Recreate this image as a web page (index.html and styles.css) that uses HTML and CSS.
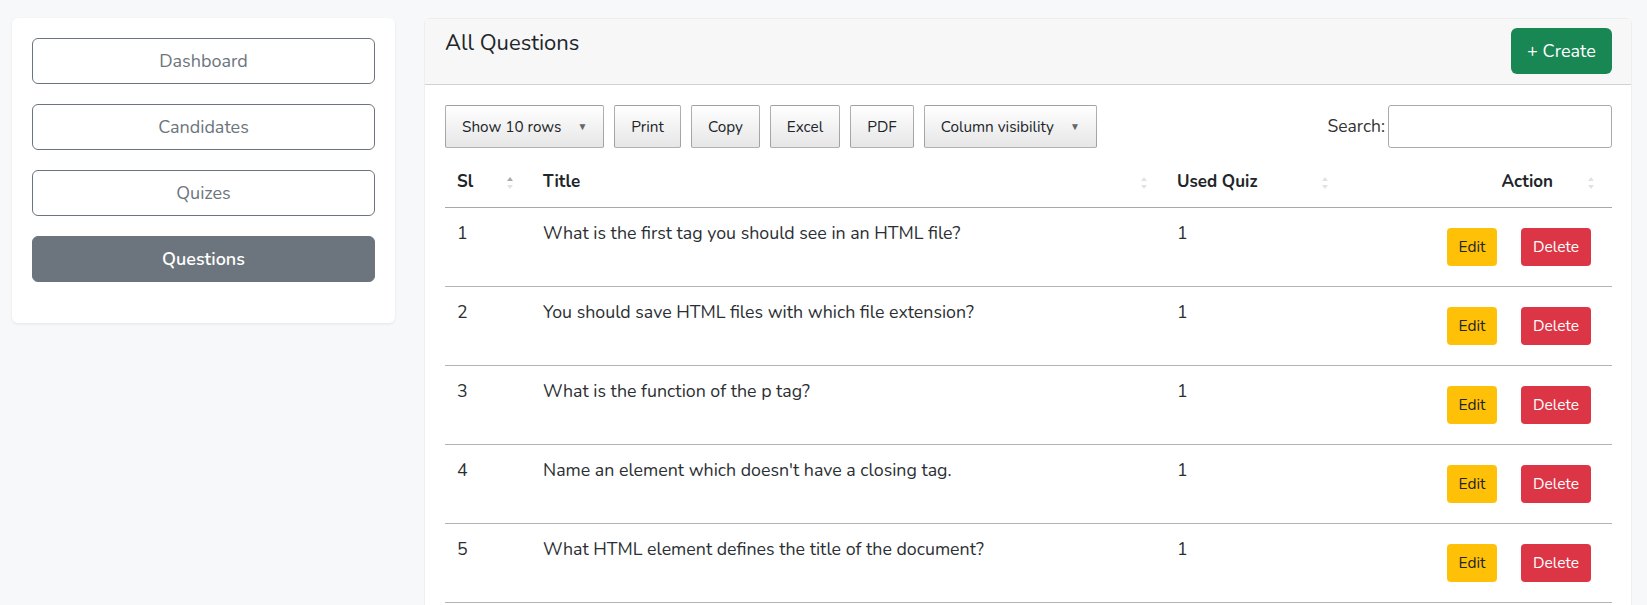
FILE: index.html
```html
<!DOCTYPE html>
<html lang="en">
<head>
<meta charset="utf-8">
<title>All Questions</title>
<link rel="stylesheet" href="styles.css">
</head>
<body>
<div class="page">
  <aside class="side-card">
    <a class="nav-btn" href="#">Dashboard</a>
    <a class="nav-btn" href="#">Candidates</a>
    <a class="nav-btn" href="#">Quizes</a>
    <a class="nav-btn active" href="#">Questions</a>
  </aside>
  <main class="main-card">
    <div class="card-header">
      <h1 class="card-title">All Questions</h1>
      <a class="btn-create" href="#">+ Create</a>
    </div>
    <div class="card-body">
      <div class="toolbar">
        <div class="dt-buttons">
          <button class="dt-btn">Show 10 rows <span class="caret">▼</span></button>
          <button class="dt-btn">Print</button>
          <button class="dt-btn">Copy</button>
          <button class="dt-btn">Excel</button>
          <button class="dt-btn">PDF</button>
          <button class="dt-btn">Column visibility <span class="caret">▼</span></button>
        </div>
        <label class="search">Search:<input type="text" class="search-input"></label>
      </div>
      <table class="qtable">
        <colgroup>
          <col class="c-sl"><col class="c-title"><col class="c-used"><col class="c-action">
        </colgroup>
        <thead>
          <tr>
            <th>Sl<span class="sort asc"></span></th>
            <th>Title<span class="sort"></span></th>
            <th>Used Quiz<span class="sort"></span></th>
            <th class="th-action">Action<span class="sort"></span></th>
          </tr>
        </thead>
        <tbody>
          <tr>
            <td>1</td><td>What is the first tag you should see in an HTML file?</td><td>1</td>
            <td class="td-action"><a class="btn-edit" href="#">Edit</a><a class="btn-delete" href="#">Delete</a></td>
          </tr>
          <tr>
            <td>2</td><td>You should save HTML files with which file extension?</td><td>1</td>
            <td class="td-action"><a class="btn-edit" href="#">Edit</a><a class="btn-delete" href="#">Delete</a></td>
          </tr>
          <tr>
            <td>3</td><td>What is the function of the p tag?</td><td>1</td>
            <td class="td-action"><a class="btn-edit" href="#">Edit</a><a class="btn-delete" href="#">Delete</a></td>
          </tr>
          <tr>
            <td>4</td><td>Name an element which doesn't have a closing tag.</td><td>1</td>
            <td class="td-action"><a class="btn-edit" href="#">Edit</a><a class="btn-delete" href="#">Delete</a></td>
          </tr>
          <tr>
            <td>5</td><td>What HTML element defines the title of the document?</td><td>1</td>
            <td class="td-action"><a class="btn-edit" href="#">Edit</a><a class="btn-delete" href="#">Delete</a></td>
          </tr>
        </tbody>
      </table>
    </div>
  </main>
</div>
</body>
</html>
```
FILE: styles.css
```css
* { box-sizing: border-box; }
html, body { margin: 0; padding: 0; }
body {
  background: #f7f8fa;
  font-family: "Nunito", "Lato", "Noto Sans", sans-serif;
  color: #212529;
  font-size: 16px;
  line-height: 1.5;
}
.page {
  display: flex;
  align-items: flex-start;
  padding: 18px 12px 0 12px;
  gap: 29px;
}
.side-card {
  width: 383px;
  flex: none;
  background: #fff;
  border-radius: 6px;
  box-shadow: 0 1px 3px rgba(0,0,0,.08);
  padding: 20px 20px 41px 20px;
  display: flex;
  flex-direction: column;
  gap: 20px;
}
.nav-btn {
  display: block;
  height: 46px;
  line-height: 44px;
  text-align: center;
  border: 1px solid #6c757d;
  border-radius: 6px;
  color: #6c757d;
  font-size: 18px;
  text-decoration: none;
}
.nav-btn.active {
  background: #6c757d;
  color: #fff;
  font-weight: 600;
}
.main-card {
  width: 1208px;
  flex: none;
  background: #fff;
  border: 1px solid #eceef0;
  border-radius: 5px 5px 0 0;
  min-height: 600px;
}
.card-header {
  display: flex;
  justify-content: space-between;
  align-items: flex-start;
  height: 66px;
  background: #f7f7f7;
  border-bottom: 1px solid #d2d2d2;
  padding: 9px 19px 0 20px;
}
.card-title {
  margin: 0;
  font-size: 22px;
  font-weight: 400;
  line-height: 30px;
  color: #212529;
}
.btn-create {
  display: block;
  width: 101px;
  height: 46px;
  line-height: 46px;
  text-align: center;
  background: #198754;
  color: #fff;
  border-radius: 6px;
  font-size: 18px;
  text-decoration: none;
}
.card-body {
  padding: 20px 19px 0 20px;
}
.toolbar {
  display: flex;
  justify-content: space-between;
  align-items: center;
}
.dt-buttons {
  display: flex;
  gap: 10px;
}
.dt-btn {
  height: 43px;
  padding: 0 16px;
  border: 1px solid rgba(0,0,0,.3);
  border-radius: 2px;
  background: linear-gradient(to bottom, #ffffff 0%, #e6e6e6 100%);
  font-family: "Nunito", "Lato", "Noto Sans", sans-serif;
  font-size: 15.3px;
  color: #212529;
  cursor: pointer;
}
.caret {
  font-size: 10px;
  color: #666;
  margin-left: 12px;
  vertical-align: 2px;
}
.search {
  display: flex;
  align-items: center;
  font-size: 17.5px;
  color: #333;
}
.search-input {
  margin-left: 3px;
  width: 224px;
  height: 43px;
  border: 1px solid #aaa;
  border-radius: 3px;
  background: #fff;
}
.qtable {
  width: 100%;
  margin-top: 8px;
  border-collapse: collapse;
  table-layout: fixed;
}
.c-sl { width: 86px; }
.c-title { width: 634px; }
.c-used { width: 181px; }
.c-action { width: auto; }
.qtable th {
  position: relative;
  text-align: left;
  font-weight: 700;
  font-size: 17px;
  line-height: 24px;
  padding: 14px 12px 13px 12px;
  border-bottom: 1px solid #a8a8a8;
}
.qtable th.th-action {
  text-align: right;
  padding-right: 59px;
}
.sort {
  position: absolute;
  right: 17px;
  top: 21px;
  width: 7px;
  height: 12px;
}
.sort::before, .sort::after {
  content: "";
  position: absolute;
  left: 0;
  border-left: 3.5px solid transparent;
  border-right: 3.5px solid transparent;
}
.sort::before {
  top: 0;
  border-bottom: 4px solid #e2e2e2;
}
.sort::after {
  bottom: 0;
  border-top: 4px solid #e2e2e2;
}
.sort.asc::before { border-bottom-color: #a9a9a9; }
.qtable td {
  vertical-align: top;
  font-size: 17.8px;
  line-height: 24px;
  padding: 13px 12px 12px 12px;
  border-bottom: 1px solid #b4b4b4;
  color: #2b2f33;
}
.qtable td.td-action {
  text-align: right;
  padding: 20px 21px 20px 12px;
  white-space: nowrap;
}
.btn-edit, .btn-delete {
  display: inline-block;
  height: 38px;
  line-height: 38px;
  font-size: 15.5px;
  border-radius: 4px;
  text-decoration: none;
  text-align: center;
  vertical-align: top;
}
.btn-edit {
  width: 50px;
  background: #ffc107;
  color: #212529;
}
.btn-delete {
  width: 70px;
  margin-left: 24px;
  background: #dc3545;
  color: #fff;
}
```
